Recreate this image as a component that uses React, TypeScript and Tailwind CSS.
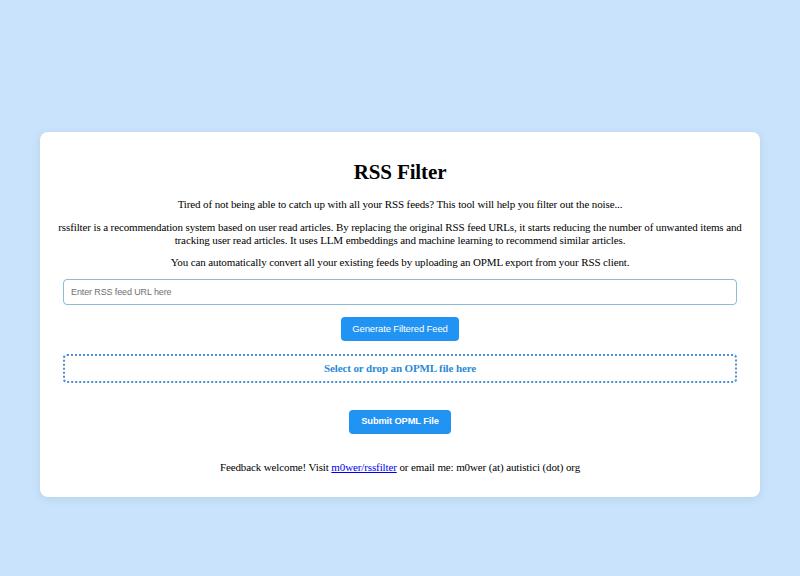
export default function App() {
  const serif = { fontFamily: '"Liberation Serif", "Times New Roman", serif', letterSpacing: "-0.12px" };
  const sans = { fontFamily: '"Liberation Sans", Arial, sans-serif' };
  return (
    <div className="min-h-[576px] w-full bg-[#c8e3fb] pt-[132px]" style={serif}>
      <div className="mx-auto w-[720px] rounded-[8px] bg-white px-[17px] pt-[27px] pb-[23px] text-center text-black shadow-[0_2px_10px_rgba(0,0,0,0.08)]">
        <h1 className="text-[21px] font-bold leading-[26px]">RSS Filter</h1>
        <p className="mt-[13px] text-[11px] leading-[13px]">
          Tired of not being able to catch up with all your RSS feeds? This tool will help you filter out the noise...
        </p>
        <p className="mt-[10px] text-[11px] leading-[13px]">
          rssfilter is a recommendation system based on user read articles. By replacing the original RSS feed URLs, it starts reducing the number of unwanted items and tracking user read articles. It uses LLM embeddings and machine learning to recommend similar articles.
        </p>
        <p className="mt-[9px] text-[11px] leading-[13px]">
          You can automatically convert all your existing feeds by uploading an OPML export from your RSS client.
        </p>
        <div className="mt-[10px] px-[6px]">
          <input
            type="text"
            placeholder="Enter RSS feed URL here"
            className="block h-[26px] w-full rounded-[4px] border border-[#8dbbd8] px-[7px] text-[9px] text-black outline-none placeholder:text-[#707070]"
            style={sans}
          />
        </div>
        <div className="mt-[12px] flex justify-center">
          <button className="h-[24px] w-[118px] rounded-[4px] bg-[#2193f3] text-[9.5px] text-white" style={sans}>
            Generate Filtered Feed
          </button>
        </div>
        <div className="mt-[13px] px-[6px]">
          <div className="flex h-[29px] items-center justify-center rounded-[4px] border-2 border-dotted border-[#4a90d2] text-[11px] font-bold text-[#2c8ad6]">
            Select or drop an OPML file here
          </div>
        </div>
        <div className="mt-[27px] flex justify-center">
          <button className="h-[24px] w-[102px] rounded-[4px] bg-[#2193f3] text-[9.3px] font-bold text-white" style={sans}>
            Submit OPML File
          </button>
        </div>
        <p className="mt-[27px] text-[11px] leading-[13px]">
          Feedback welcome! Visit{" "}
          <a href="#" className="text-[#0000ee] underline">
            m0wer/rssfilter
          </a>{" "}
          or email me: m0wer (at) autistici (dot) org
        </p>
      </div>
    </div>
  );
}
